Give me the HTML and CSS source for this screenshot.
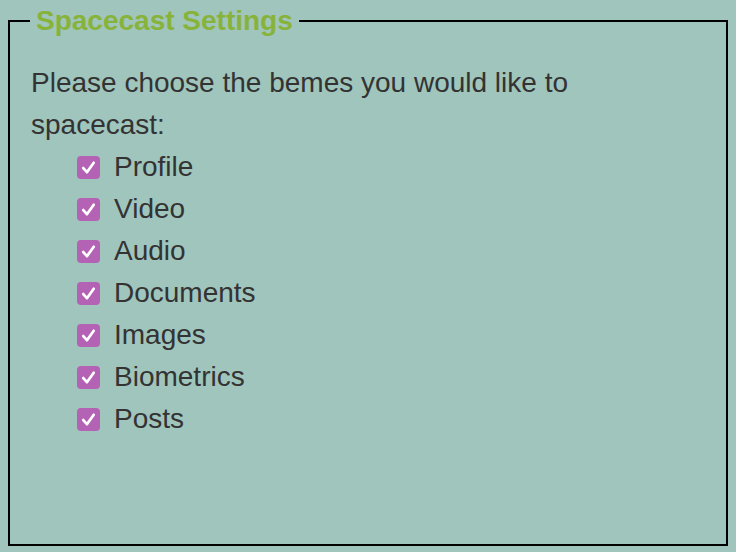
FILE: index.html
```html
<!DOCTYPE html>
<html lang="en">

<head>
    <meta charset="UTF-8">
    <meta name="viewport" content="width=device-width, initial-scale=1.0">
    <title>Spacecast Settings</title>
    <link rel="stylesheet" href="styles.css">
</head>

<body>
    <fieldset class="settings">
        <legend>Spacecast Settings</legend>
        <p class="intro">Please choose the bemes you would like to spacecast:</p>
        <ul class="beme_list">
            <li><label><span class="box"><svg viewBox="0 0 22 22"><path d="M6 11.5 L9.5 15.5 L16 6.5" /></svg></span>Profile</label></li>
            <li><label><span class="box"><svg viewBox="0 0 22 22"><path d="M6 11.5 L9.5 15.5 L16 6.5" /></svg></span>Video</label></li>
            <li><label><span class="box"><svg viewBox="0 0 22 22"><path d="M6 11.5 L9.5 15.5 L16 6.5" /></svg></span>Audio</label></li>
            <li><label><span class="box"><svg viewBox="0 0 22 22"><path d="M6 11.5 L9.5 15.5 L16 6.5" /></svg></span>Documents</label></li>
            <li><label><span class="box"><svg viewBox="0 0 22 22"><path d="M6 11.5 L9.5 15.5 L16 6.5" /></svg></span>Images</label></li>
            <li><label><span class="box"><svg viewBox="0 0 22 22"><path d="M6 11.5 L9.5 15.5 L16 6.5" /></svg></span>Biometrics</label></li>
            <li><label><span class="box"><svg viewBox="0 0 22 22"><path d="M6 11.5 L9.5 15.5 L16 6.5" /></svg></span>Posts</label></li>
        </ul>
    </fieldset>
</body>

</html>
```

FILE: styles.css
```css
html {
    background-color: #a0c5bd;
}

body {
    margin: 8px;
    font-family: "Liberation Sans", Arial, sans-serif;
    color: #333333;
}

.settings {
    box-sizing: border-box;
    height: 538px;
    margin: 0;
    padding: 0 20px;
    border: 2px solid #000000;
}

.settings>legend {
    padding: 0 6px;
    font-size: 28px;
    line-height: 26px;
    font-weight: bold;
    color: #88b33a;
}

.intro {
    max-width: 560px;
    margin: 28px 0 0 1px;
    font-size: 28px;
    line-height: 42px;
}

.beme_list {
    list-style: none;
    margin: 0;
    padding-left: 47px;
    font-size: 28px;
    line-height: 42px;
}

.beme_list label {
    display: flex;
    align-items: center;
    gap: 14px;
}

.box {
    width: 23px;
    height: 23px;
    border-radius: 4px;
    background-color: #b462b4;
    display: flex;
}

.box svg {
    width: 23px;
    height: 23px;
    fill: none;
    stroke: #ffffff;
    stroke-width: 2.6;
    stroke-linecap: round;
    stroke-linejoin: round;
}
```
